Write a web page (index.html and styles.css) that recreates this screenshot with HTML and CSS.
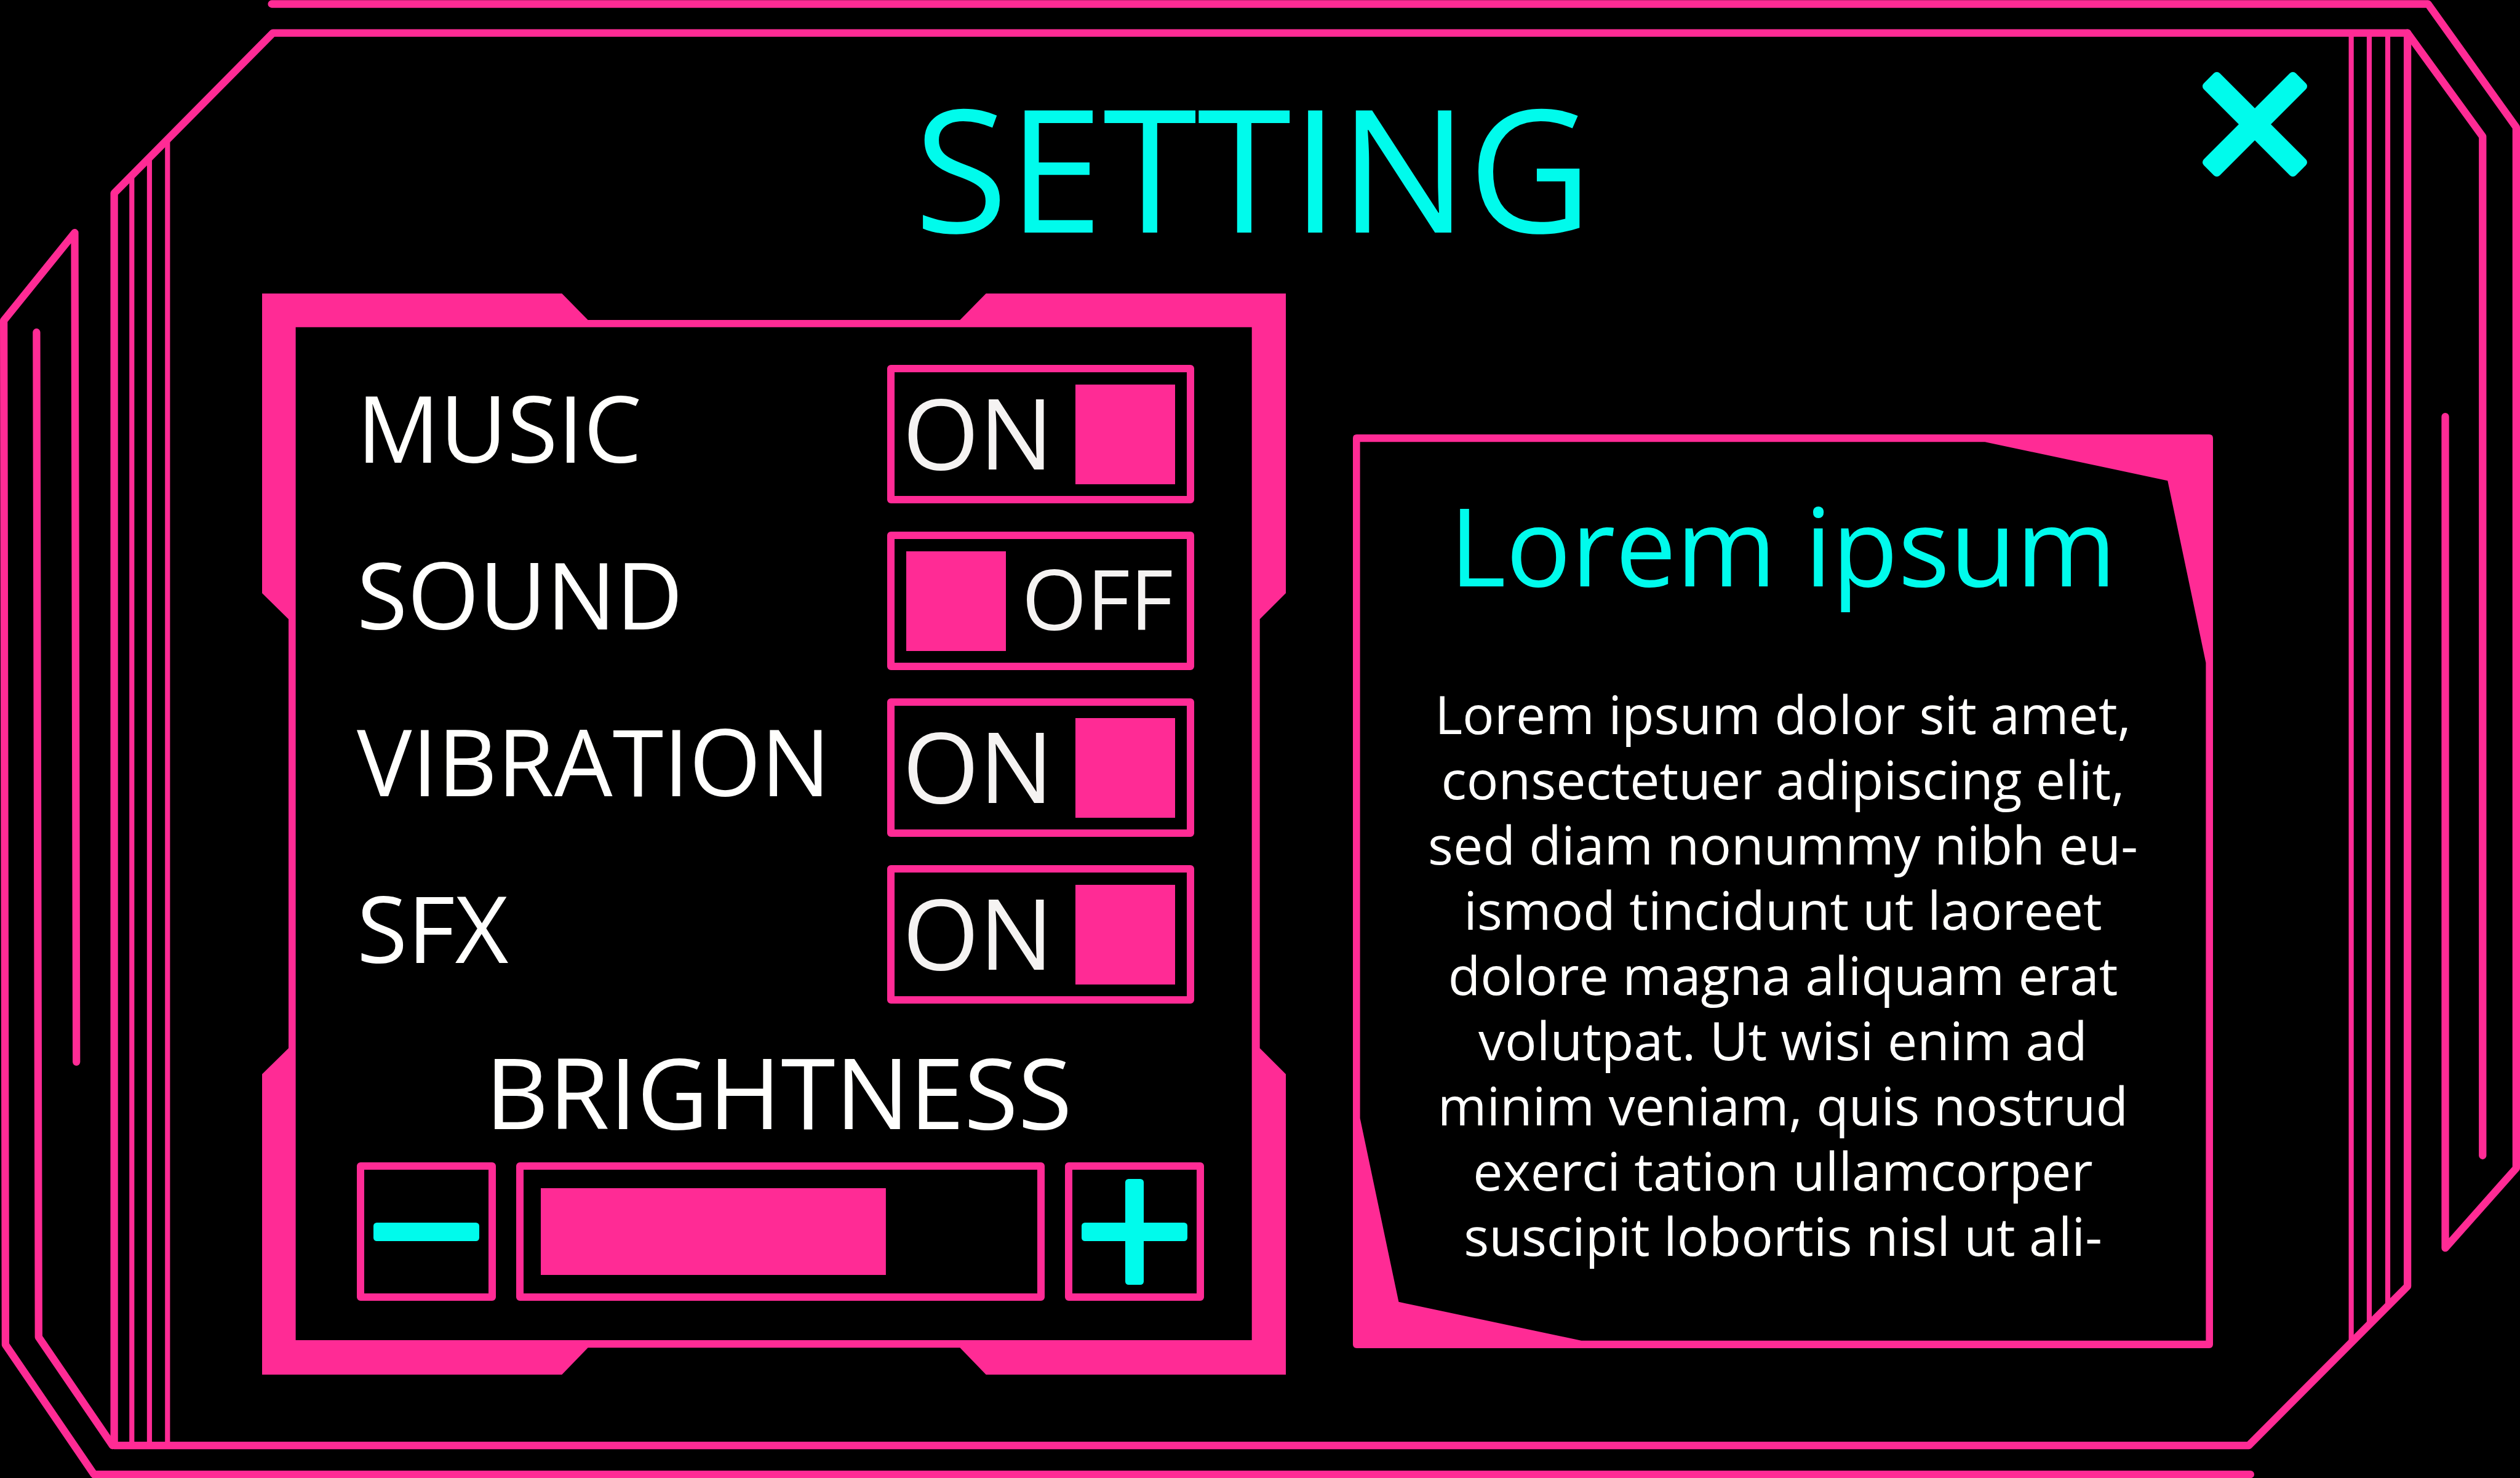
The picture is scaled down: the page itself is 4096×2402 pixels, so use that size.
FILE: index.html
```html
<!DOCTYPE html>
<html lang="en">
<head>
<meta charset="utf-8">
<title>Setting</title>
<link rel="stylesheet" href="styles.css">
</head>
<body>
<div class="screen">
  <svg class="frame" viewBox="0 0 6002 3520" preserveAspectRatio="none" aria-hidden="true">
    <g class="frame-thick">
      <path d="M647 9.500H5783L5993 303V2781L5824 2971V992"/>
      <path d="M5360 3510H224L13 3201L9 763L178 554L182 2528"/>
      <path d="M650 78.500H5734V3062L5356 3441H272V460Z"/>
      <path d="M5734 78.500L5913 325V2751"/>
      <path d="M268 3441L92 3183L87 791"/>
    </g>
    <g class="frame-thin">
      <path d="M314 418V3441M356 376V3441M399 332V3441"/>
      <path d="M5600 78V3196M5643 78V3153M5687 78V3109"/>
    </g>
  </svg>

  <header class="header">
    <h1 class="title">SETTING</h1>
    <button class="close" type="button" aria-label="Close">
      <svg viewBox="0 0 252 252" aria-hidden="true">
        <rect x="-29" y="99" width="310" height="54" rx="10" transform="rotate(45 126 126)"/>
        <rect x="-29" y="99" width="310" height="54" rx="10" transform="rotate(-45 126 126)"/>
      </svg>
    </button>
  </header>

  <main class="panels">
    <section class="panel settings">
      <svg class="panel-frame" viewBox="625 698 2438 2573" preserveAspectRatio="none" aria-hidden="true">
        <path fill-rule="evenodd" d="M625 698H1339L1401 761H2287L2349 698H3063V1411L3001 1473V2494L3063 2556V3271H2349L2287 3207H1401L1339 3271H625V2556L688 2494V1473L625 1411ZM705 778V3189H2982V778Z"/>
      </svg>
      <div class="rows">
        <div class="row">
          <label class="row-label" for="music">MUSIC</label>
          <span class="switch on"><span class="state">ON</span><input class="knob" type="checkbox" id="music" checked></span>
        </div>
        <div class="row">
          <label class="row-label" for="sound">SOUND</label>
          <span class="switch off"><input class="knob" type="checkbox" id="sound"><span class="state">OFF</span></span>
        </div>
        <div class="row">
          <label class="row-label" for="vibration">VIBRATION</label>
          <span class="switch on"><span class="state">ON</span><input class="knob" type="checkbox" id="vibration" checked></span>
        </div>
        <div class="row">
          <label class="row-label" for="sfx">SFX</label>
          <span class="switch on"><span class="state">ON</span><input class="knob" type="checkbox" id="sfx" checked></span>
        </div>
      </div>
      <label class="brightness-label" for="brightness">BRIGHTNESS</label>
      <div class="brightness">
        <button class="step" type="button" aria-label="Decrease brightness">
          <svg viewBox="0 0 252 252" aria-hidden="true"><rect x="0" y="104" width="252" height="44" rx="8"/></svg>
        </button>
        <input class="level" type="range" id="brightness" min="0" max="100" value="72" style="--level: 72%">
        <button class="step" type="button" aria-label="Increase brightness">
          <svg viewBox="0 0 252 252" aria-hidden="true"><rect x="0" y="104" width="252" height="44" rx="8"/><rect x="104" y="0" width="44" height="252" rx="8"/></svg>
        </button>
      </div>
    </section>

    <section class="panel info">
      <svg class="panel-frame" viewBox="3223 1033 2048 2174" preserveAspectRatio="none" aria-hidden="true">
        <path fill-rule="evenodd" d="M3232 1033H5262Q5271 1033 5271 1042V3198Q5271 3207 5262 3207H3232Q3223 3207 3223 3198V1042Q3223 1033 3232 1033ZM3240 1051V2660L3332 3097L3767 3189H5254V1576L5163 1143L4728 1051Z"/>
      </svg>
      <h2 class="info-title">Lorem ipsum</h2>
      <p class="info-text">Lorem ipsum dolor sit amet,<br>consectetuer adipiscing elit,<br>sed diam nonummy nibh eu-<br>ismod tincidunt ut laoreet<br>dolore magna aliquam erat<br>volutpat. Ut wisi enim ad<br>minim veniam, quis nostrud<br>exerci tation ullamcorper<br>suscipit lobortis nisl ut ali-</p>
    </section>
  </main>
</div>
</body>
</html>
```
FILE: styles.css
```css
:root {
  --pink: #ff2b95;
  --cyan: #00fbec;
  --white: #fffffd;
  --soft-white: #f5f3f2;
}

* {
  box-sizing: border-box;
}

body {
  margin: 0;
  background: #000;
  color: var(--white);
  font-family: "Open Sans", "Noto Sans", sans-serif;
}

h1,
h2,
p {
  margin: 0;
  font-weight: 400;
}

button {
  padding: 0;
  border: 0;
  background: none;
  cursor: pointer;
}

.screen {
  position: relative;
  min-height: 100vh;
  padding-top: 116px;
  padding-bottom: 169px;
}

/* Decorative line work around the whole screen */
.frame {
  position: absolute;
  inset: 0;
  width: 100%;
  height: 100%;
  fill: none;
  stroke: var(--pink);
  stroke-linecap: round;
  stroke-linejoin: round;
  pointer-events: none;
}

.frame-thick {
  stroke-width: 18;
}

.frame-thin {
  stroke-width: 12;
  stroke-linecap: butt;
}

.header {
  position: relative;
  display: grid;
  grid-template-columns: 1fr auto 1fr;
  align-items: start;
  padding: 0 345px 0 323px;
}

.title {
  grid-column: 2;
  padding-top: 15px;
  color: var(--cyan);
  font-size: 278px;
  line-height: 278px;
}

.close {
  justify-self: end;
  width: 172px;
  height: 172px;
}

.close svg,
.step svg {
  display: block;
  width: 172px;
  height: 172px;
  fill: var(--cyan);
}

.panels {
  display: grid;
  grid-template-columns: 1664fr 1398fr;
  gap: 109px;
  padding: 68px 499px 0 426px;
}

.panel {
  position: relative;
}

.panel-frame {
  position: absolute;
  inset: 0;
  width: 100%;
  height: 100%;
  fill: var(--pink);
  pointer-events: none;
}

.settings {
  padding: 116px 133px 119px 154px;
}

.rows {
  display: grid;
  gap: 46px;
  padding-right: 16px;
}

.row {
  display: flex;
  align-items: center;
  justify-content: space-between;
}

.row-label {
  padding-bottom: 24px;
  font-size: 150px;
  line-height: 150px;
}

.switch {
  display: flex;
  align-items: center;
  justify-content: space-between;
  width: 499px;
  height: 225px;
  padding: 0 19px;
  border: 12px solid var(--pink);
  border-radius: 6px;
  color: var(--soft-white);
}

.switch.on {
  padding-left: 13px;
}

.switch.off {
  padding-right: 22px;
}

.state {
  padding-bottom: 10px;
}

.on .state {
  font-size: 160px;
  line-height: 160px;
}

.off .state {
  font-size: 136px;
  line-height: 136px;
}

.knob {
  appearance: none;
  width: 162px;
  height: 162px;
  margin: 0;
  background: var(--pink);
  cursor: pointer;
}

.brightness-label {
  display: block;
  padding: 62px 6px 36px 0;
  font-size: 160px;
  line-height: 160px;
  text-align: center;
}

.brightness {
  display: flex;
  gap: 33px;
}

.step {
  display: grid;
  place-items: center;
  width: 226px;
  height: 225px;
  border: 12px solid var(--pink);
  border-radius: 6px;
}

.level {
  appearance: none;
  flex: 1;
  min-width: 0;
  height: 225px;
  margin: 0;
  padding: 30px 28px;
  border: 12px solid var(--pink);
  border-radius: 6px;
  background: linear-gradient(var(--pink), var(--pink)) left / var(--level) 100% no-repeat content-box;
  cursor: pointer;
}

.level::-webkit-slider-thumb {
  appearance: none;
  width: 1px;
  height: 141px;
  background: transparent;
}

.info {
  margin: 229px 0 43px;
  padding: 91px 0 130px;
  text-align: center;
}

.info-title {
  color: var(--cyan);
  font-size: 176px;
  line-height: 176px;
}

.info-text {
  padding-top: 134px;
  font-size: 86px;
  line-height: 106px;
}
```
